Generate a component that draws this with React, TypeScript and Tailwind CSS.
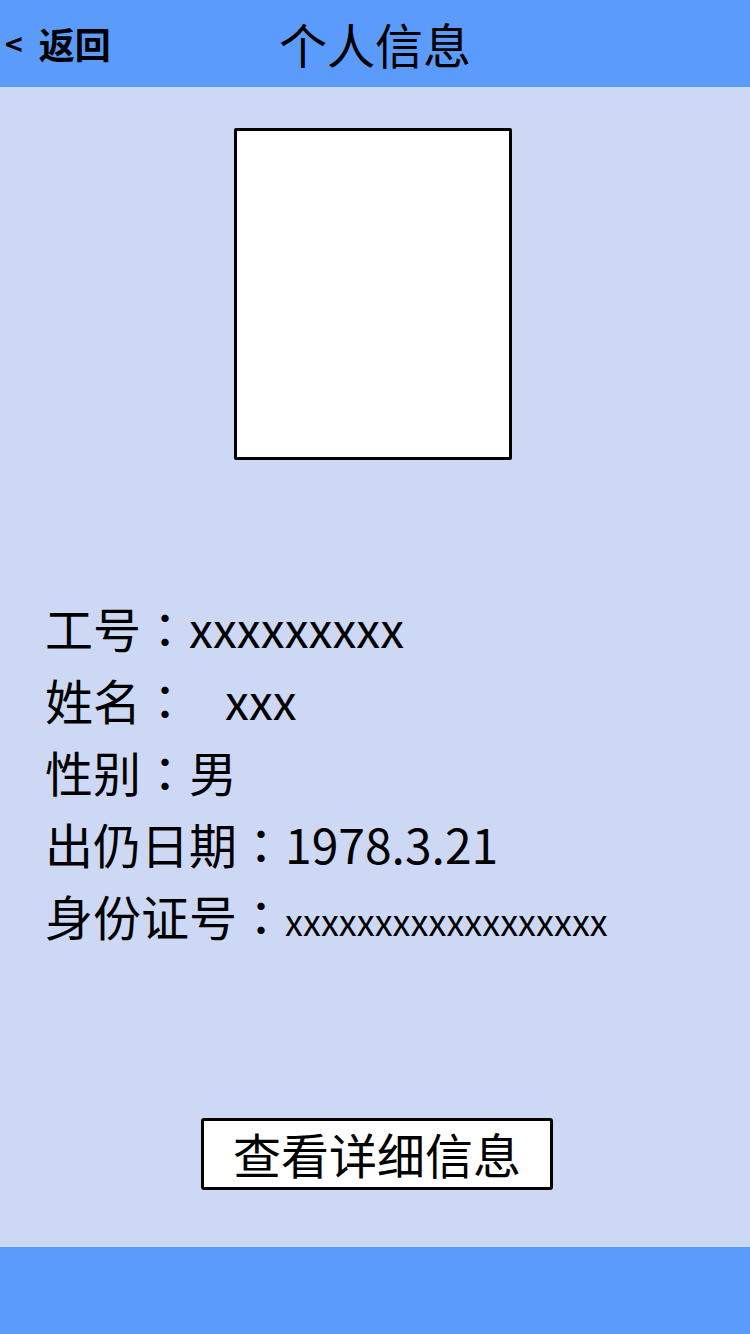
import React from 'react'

const font = { fontFamily: '"Noto Sans CJK SC", "Noto Sans", sans-serif' }
const colonFont = { fontFamily: '"Noto Sans CJK TC", "Noto Sans CJK SC", sans-serif' }

const rows: { label: string; value: string; valueClass?: string }[] = [
  { label: '工号', value: 'xxxxxxxxx' },
  { label: '姓名', value: 'xxx', valueClass: 'ml-[36px]' },
  { label: '性别', value: '男' },
  { label: '出仍日期', value: '1978.3.21' },
  { label: '身份证号', value: 'xxxxxxxxxxxxxxxxxx', valueClass: 'text-[36px] leading-none' }
]

export default function App() {
  return (
    <div
      className="w-[750px] h-[1334px] flex flex-col bg-[#cdd8f5] text-black"
      style={font}
    >
      {/* header */}
      <div className="relative h-[87px] flex-shrink-0 bg-[#5b9bfc] flex items-center justify-center">
        <button className="absolute left-[5px] top-0 h-full flex items-center gap-[16px] font-bold text-[36px] leading-none pb-[2px]">
          <span className="text-[30px]">&lt;</span>
          <span>返回</span>
        </button>
        <h1 className="text-[48px] leading-none pb-[2px]">个人信息</h1>
      </div>

      {/* content */}
      <div className="flex-1 flex flex-col">
        <div className="pt-[41px] flex justify-center">
          <div className="w-[278px] h-[332px] bg-white border-[3px] border-black rounded-[2px] -translate-x-[2px]" />
        </div>

        <div className="mt-[131px] pl-[45px] text-[48px] leading-[72px]">
          {rows.map(row => (
            <div key={row.label} className="h-[72px] whitespace-nowrap">
              <span>{row.label}</span>
              <span style={colonFont}>：</span>
              <span className={row.valueClass}>{row.value}</span>
            </div>
          ))}
        </div>

        <div className="mt-[167px] flex justify-center">
          <button className="w-[352px] h-[72px] translate-x-[2px] bg-white border-[3px] border-black rounded-[3px] text-[48px] leading-none flex items-center justify-center pb-[2px]">
            查看详细信息
          </button>
        </div>
      </div>

      {/* footer */}
      <div className="h-[87px] flex-shrink-0 bg-[#5b9bfc]" />
    </div>
  )
}
